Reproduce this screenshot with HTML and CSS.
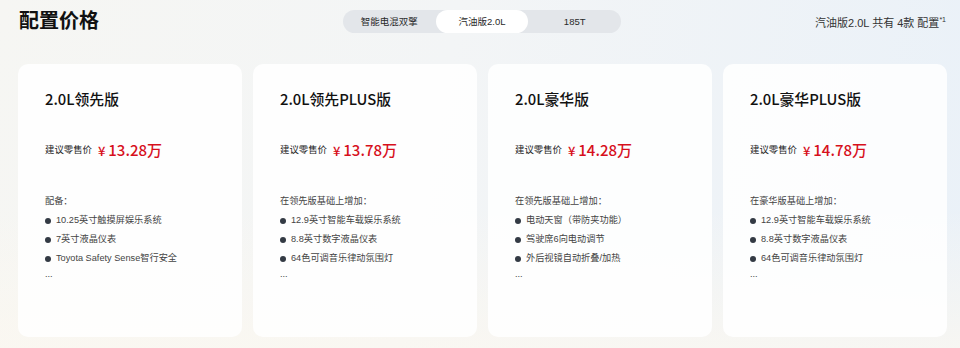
FILE: index.html
```html
<!DOCTYPE html>
<html lang="zh-CN">
<head>
  <meta charset="UTF-8">
  <title>配置价格</title>
  <link rel="stylesheet" href="styles.css">
</head>
<body>

  <div class="page">
    <!-- Header: title, engine tabs, count -->
    <div class="header">
      <h1>配置价格</h1>

      <div class="tabs">
        <span class="tab">智能电混双擎</span>
        <span class="tab active">汽油版2.0L</span>
        <span class="tab">185T</span>
      </div>

      <div class="count">汽油版2.0L 共有 4款 配置<sup>*1</sup></div>
    </div>

    <!-- Trim cards -->
    <div class="cards">
      <div class="card">
        <h2>2.0L领先版</h2>
        <div class="price"><span class="label">建议零售价</span><span class="amount"><span class="yen">¥</span>13.28万</span></div>
        <p class="intro">配备：</p>
        <ul>
          <li>10.25英寸触摸屏娱乐系统</li>
          <li>7英寸液晶仪表</li>
          <li>Toyota Safety Sense智行安全</li>
        </ul>
        <p class="more">...</p>
      </div>

      <div class="card">
        <h2>2.0L领先PLUS版</h2>
        <div class="price"><span class="label">建议零售价</span><span class="amount"><span class="yen">¥</span>13.78万</span></div>
        <p class="intro">在领先版基础上增加：</p>
        <ul>
          <li>12.9英寸智能车载娱乐系统</li>
          <li>8.8英寸数字液晶仪表</li>
          <li>64色可调音乐律动氛围灯</li>
        </ul>
        <p class="more">...</p>
      </div>

      <div class="card">
        <h2>2.0L豪华版</h2>
        <div class="price"><span class="label">建议零售价</span><span class="amount"><span class="yen">¥</span>14.28万</span></div>
        <p class="intro">在领先版基础上增加：</p>
        <ul>
          <li>电动天窗（带防夹功能）</li>
          <li>驾驶席6向电动调节</li>
          <li>外后视镜自动折叠/加热</li>
        </ul>
        <p class="more">...</p>
      </div>

      <div class="card">
        <h2>2.0L豪华PLUS版</h2>
        <div class="price"><span class="label">建议零售价</span><span class="amount"><span class="yen">¥</span>14.78万</span></div>
        <p class="intro">在豪华版基础上增加：</p>
        <ul>
          <li>12.9英寸智能车载娱乐系统</li>
          <li>8.8英寸数字液晶仪表</li>
          <li>64色可调音乐律动氛围灯</li>
        </ul>
        <p class="more">...</p>
      </div>
    </div>
  </div>

</body>
</html>
```

FILE: styles.css
```css
/* Page base */
body {
  margin: 0;
  font-family: "Liberation Sans", "Noto Sans CJK SC", sans-serif;
  color: #222;
  background: linear-gradient(100deg, #f6f6f3 0%, #f3f5f6 45%, #eaf1f8 100%);
  height: 348px;
  overflow: hidden;
}

.page {
  padding: 0 14px 0 18px;
  height: 348px;
  box-sizing: border-box;
  background: linear-gradient(180deg, rgba(255, 255, 255, 0) 60%, rgba(252, 248, 240, 0.7) 100%);
}

/* Header row */
.header {
  display: flex;
  align-items: center;
  height: 42px;
}

h1 {
  margin: 0 0 0 1px;
  font-size: 20px;
  font-weight: 700;
  color: #111;
  width: 324px;
  line-height: 42px;
}

.tabs {
  display: flex;
  width: 278px;
  height: 23px;
  margin-top: 1px;
  background: #e3e6ea;
  border-radius: 12px;
}

.tab {
  flex: 1;
  font-size: 9.5px;
  line-height: 23px;
  text-align: center;
  color: #2a2a2a;
  border-radius: 12px;
}

.tab.active {
  background: #fff;
}

.count {
  margin-left: auto;
  font-size: 11px;
  color: #333;
  margin-top: 2px;
}

.count sup {
  font-size: 7px;
  vertical-align: 5px;
  line-height: 0;
}

/* Cards */
.cards {
  display: grid;
  grid-template-columns: repeat(4, 224px);
  gap: 11px;
  margin-top: 22px;
}

.card {
  height: 273px;
  box-sizing: border-box;
  padding: 23px 20px 0 27px;
  background: rgba(255, 255, 255, 0.85);
  border-radius: 10px;
}

h2 {
  margin: 0;
  font-family: "Noto Sans CJK SC", sans-serif;
  font-size: 14.8px;
  font-weight: 500;
  line-height: 24px;
  color: #111;
}

.price {
  display: flex;
  align-items: center;
  margin-top: 26px;
  height: 24px;
}

.label {
  font-size: 9.4px;
  color: #222;
  margin-right: 6px;
}

.amount {
  font-family: "Noto Sans CJK SC", sans-serif;
  font-size: 15px;
  font-weight: 500;
  color: #d7101c;
}

.yen {
  font-size: 13px;
  margin-right: 3px;
}

.intro, .more {
  margin: 31px 0 0;
  font-size: 9.2px;
  line-height: 19px;
  color: #444;
}

ul {
  list-style: none;
  margin: 0;
  padding: 0;
}

li {
  display: flex;
  align-items: center;
  font-size: 9.2px;
  line-height: 19px;
  color: #444;
}

li::before {
  content: "";
  width: 6px;
  height: 6px;
  border-radius: 50%;
  background: #333a44;
  margin-right: 5px;
}

.more {
  margin-top: -3px;
}
```
